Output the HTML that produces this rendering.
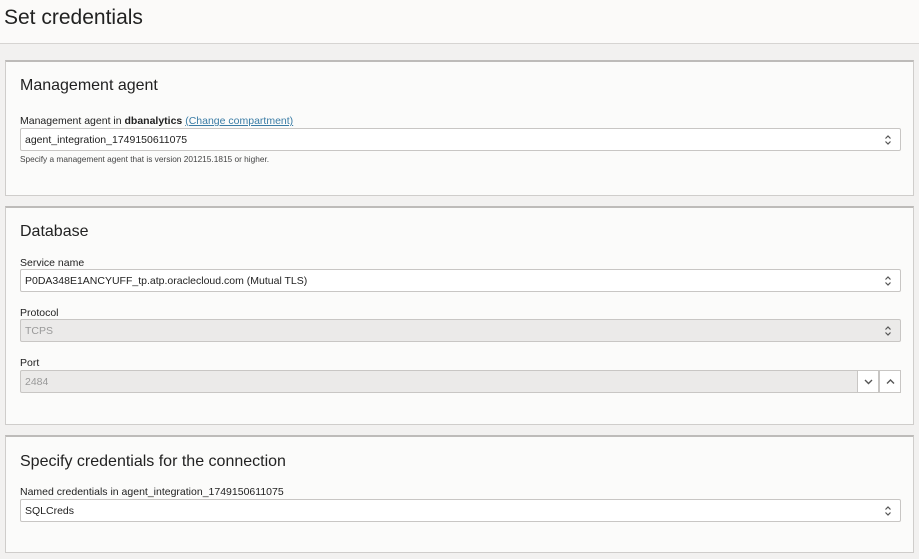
<!DOCTYPE html>
<html><head><style>
body{margin:0;width:919px;height:559px;background:#f2f1f0;font-family:"Liberation Sans",sans-serif;color:#161513;overflow:hidden;position:relative}
.hdr{position:absolute;left:0;top:0;width:919px;height:43px;background:#fbfaf9;border-bottom:1px solid #d6d4d2}
.hdr h1{margin:0;position:absolute;left:4px;top:6px;font-size:21px;font-weight:400;color:#222}
.card{position:absolute;left:5px;width:909px;background:#fbfbfa;border:1px solid #cfcdcb;border-top:2px solid #bdbbb9;box-sizing:border-box}
.t{position:absolute;left:14px;font-size:16px;color:#222}
.l{position:absolute;left:14px;font-size:10.5px;color:#222}
.in{position:absolute;left:14px;width:881px;height:23px;border:1px solid #c8c6c4;border-radius:2px;background:#fff;box-sizing:border-box;font-size:10.5px;padding:5px 4px;color:#222}
.in.d{background:#ebeae9;color:#999}
.ch{position:absolute;right:8px;top:5px}
.h{position:absolute;left:14px;font-size:8.3px;color:#444}
a{color:#3a7ca5;text-decoration:underline}
.btn{position:absolute;top:-1px;width:22px;height:23px;border:1px solid #c8c6c4;background:#fff;box-sizing:border-box}
.btn svg{position:absolute;left:6px;top:7px}
</style></head><body>
<svg width="0" height="0" style="position:absolute"><defs><symbol id="ud" viewBox="0 0 8 12"><path d="M1.5 4.5L4 2L6.5 4.5M1.5 7.5L4 10L6.5 7.5" fill="none" stroke="#555" stroke-width="1.2"/></symbol></defs></svg>
<div class="hdr"><h1>Set credentials</h1></div>
<div class="card" style="top:60px;height:136px">
<div class="t" style="top:15px">Management agent</div>
<div class="l" style="top:53px">Management agent in <b>dbanalytics</b> <a>(Change compartment)</a></div>
<div class="in" style="top:66px">agent_integration_1749150611075<svg class="ch" width="8" height="12"><use href="#ud"/></svg></div>
<div class="h" style="top:92px">Specify a management agent that is version 201215.1815 or higher.</div>
</div>
<div class="card" style="top:206px;height:219px">
<div class="t" style="top:15px">Database</div>
<div class="l" style="top:49px">Service name</div>
<div class="in" style="top:61px">P0DA348E1ANCYUFF_tp.atp.oraclecloud.com (Mutual TLS)<svg class="ch" width="8" height="12"><use href="#ud"/></svg></div>
<div class="l" style="top:99px">Protocol</div>
<div class="in d" style="top:111px">TCPS<svg class="ch" width="8" height="12"><use href="#ud"/></svg></div>
<div class="l" style="top:149px">Port</div>
<div class="in d" style="top:162px">2484<div class="btn" style="right:21px"><svg width="9" height="7"><path d="M1 2L4.5 5.5L8 2" fill="none" stroke="#555" stroke-width="1.4"/></svg></div><div class="btn" style="right:-1px"><svg width="9" height="7"><path d="M1 5.5L4.5 2L8 5.5" fill="none" stroke="#555" stroke-width="1.4"/></svg></div></div>
</div>
<div class="card" style="top:435px;height:118px">
<div class="t" style="top:16px">Specify credentials for the connection</div>
<div class="l" style="top:49px">Named credentials in agent_integration_1749150611075</div>
<div class="in" style="top:62px">SQLCreds<svg class="ch" width="8" height="12"><use href="#ud"/></svg></div>
</div>
</body></html>
